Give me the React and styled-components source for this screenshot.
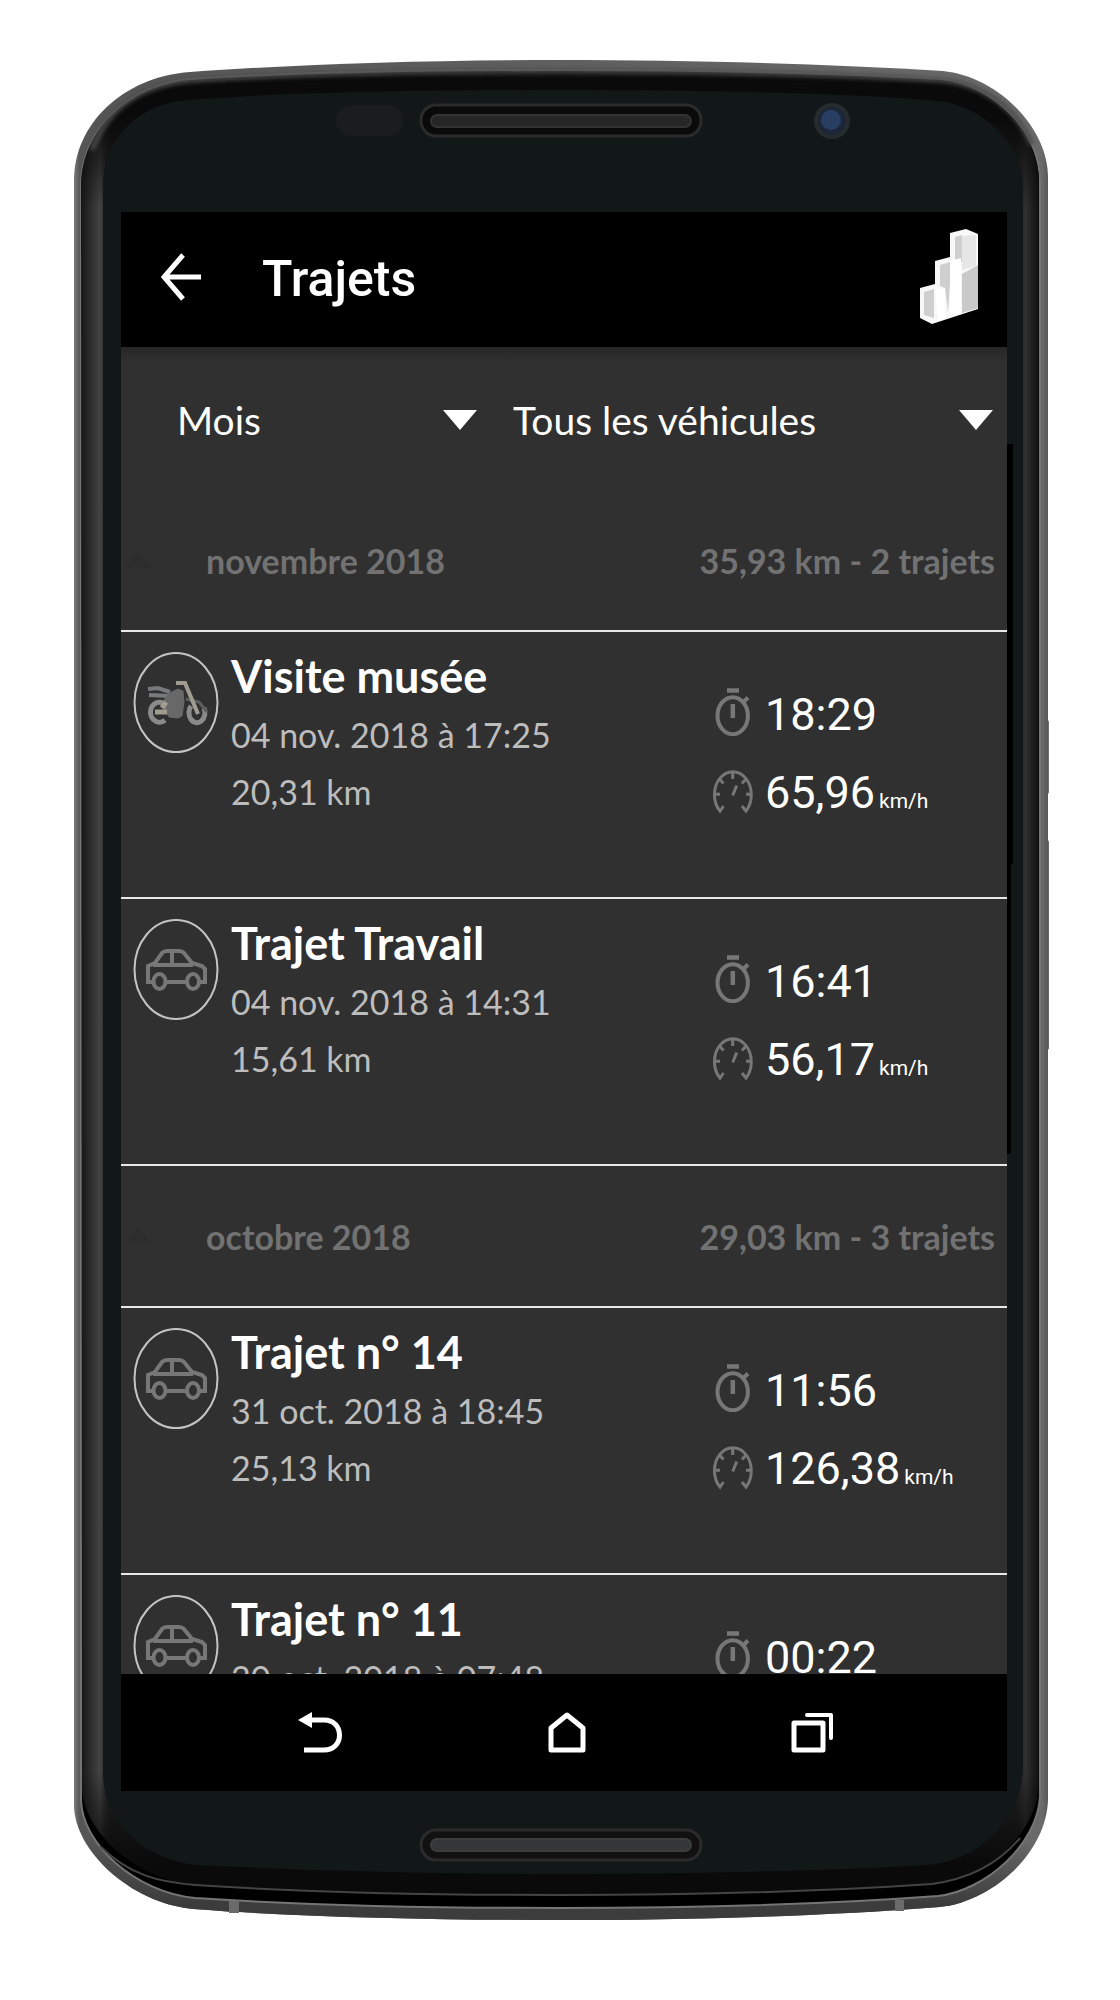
import React from 'react'
import styled, { createGlobalStyle } from 'styled-components'

const groups = [
  {
    month: 'novembre 2018',
    summary: '35,93 km - 2 trajets',
    trips: [
      { name: 'Visite musée', date: '04 nov. 2018 à 17:25', distance: '20,31 km', duration: '18:29', speed: '65,96', vehicle: 'moto' },
      { name: 'Trajet Travail', date: '04 nov. 2018 à 14:31', distance: '15,61 km', duration: '16:41', speed: '56,17', vehicle: 'car' },
    ],
  },
  {
    month: 'octobre 2018',
    summary: '29,03 km - 3 trajets',
    trips: [
      { name: 'Trajet n° 14', date: '31 oct. 2018 à 18:45', distance: '25,13 km', duration: '11:56', speed: '126,38', vehicle: 'car' },
      { name: 'Trajet n° 11', date: '20 oct. 2018 à 07:48', duration: '00:22', vehicle: 'car' },
    ],
  },
]

// Phone body: metal rim, dark bezel, glass, speakers and camera
function PhoneBody() {
  const outer = 'M74 180C74 125 122 77 190 72C300 64 430 60 561 60C690 60 830 64 943 71C995 76 1048 125 1048 178V1800C1046 1855 990 1902 940 1907C830 1916 690 1920 561 1920C430 1920 300 1917 193 1909C130 1903 74 1850 74 1805Z'
  const inner = 'M81 184C82 130 128 84 192 79C300 72 430 70 561 70C690 70 830 73 941 79C992 84 1040 130 1040 182V1796C1038 1844 985 1891 938 1896C830 1904 690 1908 561 1908C430 1908 300 1905 195 1898C135 1892 82 1844 81 1800Z'
  const bezel = 'M81 184C82 130 128 86 192 81C300 76 430 74 561 74C690 74 830 76 941 81C992 86 1039 130 1039 182V1784C1036 1836 985 1878 932 1884C830 1891 690 1895 561 1895C430 1895 300 1892 195 1885C135 1878 84 1832 82 1788Z'
  const glass = 'M103 184C104 140 135 108 178 101C260 93 410 90 561 90C700 90 850 93 939 101C990 108 1023 150 1023 186V1770C1020 1820 980 1860 928 1865C830 1871 690 1874 561 1874C430 1874 290 1870 196 1865C140 1858 104 1820 103 1774Z'
  return (
    <Body viewBox="74 60 976 1860" preserveAspectRatio="none" aria-hidden="true">
      <defs>
        <linearGradient id="side" gradientUnits="userSpaceOnUse" x1="81" x2="1040" y1="0" y2="0">
          <stop offset="0" stopColor="#161616" />
          <stop offset="0.006" stopColor="#242424" />
          <stop offset="0.02" stopColor="#444" />
          <stop offset="0.024" stopColor="#303030" />
          <stop offset="0.03" stopColor="#202020" />
          <stop offset="0.975" stopColor="#202020" />
          <stop offset="0.985" stopColor="#303030" />
          <stop offset="1" stopColor="#0c0c0c" />
        </linearGradient>
        <linearGradient id="ends" gradientUnits="userSpaceOnUse" x1="0" x2="0" y1="60" y2="1920">
          <stop offset="0" stopColor="#0a0a0a" />
          <stop offset="0.03" stopColor="#0a0a0a" />
          <stop offset="0.08" stopColor="#0a0a0a" stopOpacity="0" />
          <stop offset="0.92" stopColor="#0a0a0a" stopOpacity="0" />
          <stop offset="0.97" stopColor="#0a0a0a" />
        </linearGradient>
        <linearGradient id="rim" gradientUnits="userSpaceOnUse" x1="74" x2="1048" y1="0" y2="0">
          <stop offset="0" stopColor="#7a7a7a" />
          <stop offset="0.006" stopColor="#555" />
          <stop offset="0.994" stopColor="#6a6a6a" />
          <stop offset="1" stopColor="#585858" />
        </linearGradient>
        <linearGradient id="rimBottom" gradientUnits="userSpaceOnUse" x1="0" x2="0" y1="1840" y2="1920">
          <stop offset="0" stopColor="#3c3c3c" stopOpacity="0" />
          <stop offset="0.8" stopColor="#3c3c3c" />
        </linearGradient>
        <filter id="soft" x="-5%" y="-50%" width="110%" height="200%">
          <feGaussianBlur stdDeviation="2" />
        </filter>
      </defs>
      <rect x="1044" y="720" width="5" height="74" rx="2" fill="#707070" />
      <rect x="1044" y="840" width="5" height="210" rx="2" fill="#666" />
      <path d={outer} fill="url(#rim)" />
      <path d={outer} fill="url(#rimBottom)" />
      <path d={inner} fill="#000" stroke="#757575" strokeWidth="2" />
      <path d={bezel} fill="url(#side)" />
      <path d={bezel} fill="url(#ends)" />
      <path d="M100 1846C130 1876 160 1882 195 1885C300 1892 430 1895 561 1895C690 1895 830 1891 932 1884C970 1879 1000 1862 1020 1838" fill="none" stroke="#444" strokeWidth="2" />
      <path d="M92 150C110 100 150 84 192 80C300 73 430 71 561 71C690 71 830 74 941 80C985 84 1018 110 1032 145" fill="none" stroke="#4c4c4c" strokeWidth="5" filter="url(#soft)" />
      <path d={glass} fill="#121717" />
      <path d="M229 1901h10v12h-10zM895 1900h9v11h-9z" fill="#6b6b6b" />
      <rect x="336" y="105" width="67" height="31" rx="15" fill="#191d1e" />
      <rect x="421" y="105" width="280" height="31" rx="15" fill="#0a0a0a" stroke="#2b2b2b" strokeWidth="3" />
      <rect x="431" y="115" width="260" height="12" rx="6" fill="#262626" stroke="#333" strokeWidth="2" />
      <rect x="421" y="1830" width="280" height="30" rx="15" fill="#111" stroke="#2b2b2b" strokeWidth="3" />
      <rect x="431" y="1839" width="260" height="12" rx="6" fill="#353637" stroke="#3d3d3d" strokeWidth="2" />
      <circle cx="832" cy="121" r="18" fill="#262b2e" />
      <circle cx="832" cy="121" r="14" fill="#1c2638" />
      <circle cx="831" cy="120" r="10" fill="#283f63" />
      <path d="M1006 444h7v420h-2v290h-5z" fill="#000" />
    </Body>
  )
}

function VehicleBadge({ type }) {
  return (
    <Badge viewBox="0 0 86 101" aria-hidden="true">
      <ellipse cx="43" cy="50.5" rx="41.5" ry="49.5" fill="none" stroke="#c4c4c4" strokeWidth="2" />
      {type === 'moto' ? (
        <g fill="none" strokeWidth="3">
          <path d="M32 68A9 10 0 1 1 30 51" stroke="#8a8a8a" strokeWidth="5" />
          <path d="M58 54A8 10 0 1 0 71 56" stroke="#8a8a8a" strokeWidth="5" />
          <path d="M15 37L25 36L37 40M16 43L37 44" stroke="#777a7b" strokeWidth="4" />
          <path d="M53 47L66 50L74 60" stroke="#5c5f60" />
          <path d="M30 49L37 41L45 37L50 39L51 50L49 64L45 66L36 65L32 58Z" fill="#686868" stroke="#686868" strokeWidth="1" />
          <path d="M22 60L34 60M29 56L33 50" stroke="#a19c90" strokeWidth="5" />
          <path d="M43 31L52 31L65 62" stroke="#a19c90" strokeWidth="4" />
        </g>
      ) : (
        <g fill="none" stroke="#777" strokeWidth="4">
          <path d="M19 63H15V47L22 44L29 34Q31 32 34 32H46Q49 32 51 34L59 44L69 47L72 50V63H67M33 63H53M20 46H60M39 32V45" />
          <ellipse cx="26.5" cy="62.5" rx="6" ry="7.5" />
          <ellipse cx="60" cy="62.5" rx="6" ry="7.5" />
        </g>
      )}
    </Badge>
  )
}

function StopwatchIcon() {
  return (
    <StatIcon viewBox="0 0 40 48" aria-hidden="true">
      <ellipse cx="19.7" cy="27.7" rx="15.2" ry="18.5" strokeWidth="4" />
      <path d="M14 2.5H26M19.8 16V30" strokeWidth="4.5" />
      <path d="M30 14.5L35 9.5" strokeWidth="4" />
    </StatIcon>
  )
}

function GaugeIcon() {
  return (
    <StatIcon viewBox="0 0 40 48" aria-hidden="true">
      <path d="M10.5 36L7 41A18.5 22.5 0 0 1 1.5 24.3A18.3 22.5 0 0 1 38.2 24.3A18.5 22.5 0 0 1 33 41L29 36M2 24.3H7M33 24.3H38M19.7 2V9M6.5 9L10.5 13.5M33 9L29 13.5M19.7 25.5L23.7 15.5" strokeWidth="3" />
    </StatIcon>
  )
}

function Trip({ trip }) {
  return (
    <TripRow>
      <VehicleBadge type={trip.vehicle} />
      <TripInfo>
        <TripName>{trip.name}</TripName>
        <Meta>{trip.date}</Meta>
        {trip.distance && <Meta>{trip.distance}</Meta>}
      </TripInfo>
      <Stats>
        <Stat><StopwatchIcon />{trip.duration}</Stat>
        {trip.speed && (
          <Stat>
            <GaugeIcon />
            <span>{trip.speed}<Unit>km/h</Unit></span>
          </Stat>
        )}
      </Stats>
    </TripRow>
  )
}

function Filter({ label, value }) {
  return (
    <FilterBox>
      <Select aria-label={label} defaultValue={value}>
        <option>{value}</option>
      </Select>
      <svg width="34" height="20" viewBox="0 0 34 20" aria-hidden="true">
        <path d="M0 0H34L17 20Z" fill="#fff" />
      </svg>
    </FilterBox>
  )
}

export default function App() {
  return (
    <>
      <GlobalStyle />
      <Page>
        <Device>
          <PhoneBody />
          <Screen>
            <AppBar>
              <IconButton aria-label="Retour">
                <svg width="41" height="48" viewBox="0 0 41 48" fill="none" stroke="#fff" strokeWidth="5">
                  <path d="M22 2L3 24L22 46M2 24H40" />
                </svg>
              </IconButton>
              <Title>Trajets</Title>
              <IconButton aria-label="Statistiques">
                <svg width="60" height="98" viewBox="0 0 60 98">
                  <path d="M1 60L16 56V33L31 29V5L47 1L59 6V81L13 96L1 90Z" fill="#f8f8f8" />
                  <path d="M36 9L43 7V34L36 31ZM21 37L31 34V56L29 84L26 60L21 58ZM5 64L15 61V90L5 87Z" fill="#cfcfcf" />
                  <path d="M43 8L57 7V38L43 42Z" fill="#e6e6e6" />
                  <path d="M43 46L59 37V80L43 85Z" fill="#c9c9c9" />
                  <path d="M31 33L42 30V86L31 88ZM16 62L26 60V90L19 92Z" fill="#fff" />
                </svg>
              </IconButton>
            </AppBar>
            <Filters>
              <Filter label="Période" value="Mois" />
              <Filter label="Véhicule" value="Tous les véhicules" />
            </Filters>
            <List>
              {groups.map((group) => (
                <section key={group.month}>
                  <GroupHeader aria-expanded="true">
                    <svg width="28" height="16" viewBox="0 0 28 16" aria-hidden="true">
                      <path d="M0 16L14 0L28 16Z" fill="#2d2d2d" />
                    </svg>
                    <Month>{group.month}</Month>
                    <span>{group.summary}</span>
                  </GroupHeader>
                  <Trips>
                    {group.trips.map((trip) => <Trip key={trip.name} trip={trip} />)}
                  </Trips>
                </section>
              ))}
            </List>
            <NavBar>
              <NavButton aria-label="Précédent">
                <svg width="46" height="44" viewBox="-1 -1 46 44" fill="none" stroke="#fff" strokeWidth="5">
                  <path d="M-1 8L13 0V16Z" fill="#fff" stroke="none" />
                  <path d="M12 8H25C35 8 40.5 15 40.5 23C40.5 31 35 38 25 38H5" />
                </svg>
              </NavButton>
              <NavButton aria-label="Accueil">
                <svg width="38" height="44" viewBox="0 -1 38 44" fill="none" stroke="#fff" strokeWidth="5" strokeLinejoin="round">
                  <path d="M19 3L35 16V38H3V16Z" />
                </svg>
              </NavButton>
              <NavButton aria-label="Applications récentes">
                <svg width="44" height="44" viewBox="0 -1 44 44" fill="none" stroke="#fff" strokeWidth="5" strokeLinejoin="round">
                  <path d="M3 11H32V38H3Z" />
                  <path d="M16 3H40V26" strokeWidth="4" strokeLinecap="round" />
                </svg>
              </NavButton>
            </NavBar>
          </Screen>
        </Device>
      </Page>
    </>
  )
}

const GlobalStyle = createGlobalStyle`
  * {
    box-sizing: border-box;
  }
  body {
    margin: 0;
    background: #fff;
    font-family: Lato, "Open Sans", sans-serif;
  }
  button, select {
    margin: 0;
    padding: 0;
    border: 0;
    background: none;
    color: inherit;
    font: inherit;
  }
  svg {
    display: block;
    flex: none;
  }
`
const Page = styled.main`
  display: flex;
  height: 100vh;
  min-height: 1000px;
  padding: 60px 70px 80px 74px;
`
const Device = styled.div`
  position: relative;
  display: flex;
  flex: 1;
  min-width: 0;
  padding: 152px 43px 129px 47px;
`
const Body = styled.svg`
  position: absolute;
  inset: 0;
  width: 100%;
  height: 100%;
`
const Screen = styled.div`
  position: relative;
  display: flex;
  flex-direction: column;
  flex: 1;
  min-width: 0;
  background: #303030;
  color: #fff;
`
const AppBar = styled.header`
  display: flex;
  align-items: center;
  height: 135px;
  padding: 0 28px 6px 40px;
  background: #000;
`
const IconButton = styled.button`
  cursor: pointer;
`
const Title = styled.h1`
  flex: 1;
  margin: 0 0 0 60px;
  padding-top: 4px;
  font: 500 50px/60px Roboto, sans-serif;
`
const Filters = styled.div`
  display: grid;
  grid-template-columns: 5fr 8fr;
  gap: 36px;
  align-items: center;
  height: 143px;
  padding: 2px 14px 0 56px;
  background: linear-gradient(#262626, #303030 14px);
`
const FilterBox = styled.div`
  display: flex;
  align-items: center;
  min-width: 0;
`
const Select = styled.select`
  flex: 1;
  min-width: 0;
  height: 60px;
  appearance: none;
  font-size: 39px;
`
const List = styled.div`
  flex: 1 1 0;
  min-height: 0;
  overflow-y: auto;
  scrollbar-width: none;
`
const GroupHeader = styled.button`
  display: flex;
  align-items: center;
  width: 100%;
  height: 142px;
  padding: 0 12px 0 3px;
  border-bottom: 2px solid #e8e8e8;
  color: #727272;
  font-size: 34px;
  font-weight: 700;
  text-align: left;
`
const Month = styled.span`
  flex: 1;
  margin-left: 54px;
`
const Trips = styled.ul`
  margin: 0;
  padding: 0;
  list-style: none;
`
const TripRow = styled.li`
  display: flex;
  height: 267px;
  padding: 0 0 0 12px;
  border-bottom: 2px solid #e8e8e8;
`
const Badge = styled.svg`
  width: 86px;
  height: 101px;
  margin-top: 20px;
`
const TripInfo = styled.div`
  flex: 1;
  min-width: 0;
  padding: 14px 0 0 12px;
`
const TripName = styled.h2`
  margin: 0;
  font-size: 45px;
  font-weight: 700;
  line-height: 60px;
`
const Meta = styled.p`
  margin: 0;
  color: #bdbdbd;
  font-size: 34px;
  line-height: 57px;
`
const Stats = styled.div`
  width: 294px;
  padding-top: 44px;
`
const Stat = styled.div`
  display: flex;
  align-items: center;
  gap: 12px;
  font: 400 45px/78px Roboto, sans-serif;
  white-space: nowrap;
`
const StatIcon = styled.svg`
  width: 40px;
  height: 48px;
  margin-bottom: 6px;
  fill: none;
  stroke: #777;
`
const Unit = styled.small`
  margin-left: 4px;
  font-size: 21px;
`
const NavBar = styled.nav`
  display: flex;
  justify-content: center;
  height: 117px;
  padding-left: 6px;
  background: #000;
`
const NavButton = styled.button`
  display: flex;
  justify-content: center;
  align-items: center;
  width: 246px;
  cursor: pointer;
`
